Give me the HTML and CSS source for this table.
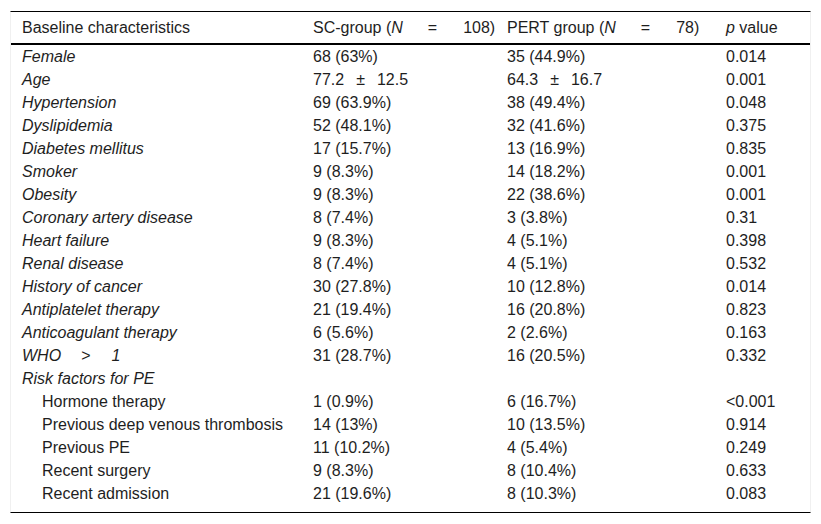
FILE: index.html
```html
<!DOCTYPE html>
<html>
<head>
<meta charset="utf-8">
<link rel="stylesheet" href="styles.css">
</head>
<body>
<div class="wrap">
<table class="tbl">
<colgroup><col class="c1"><col class="c2"><col class="c3"><col class="c4"></colgroup>
<thead>
<tr><th>Baseline characteristics</th><th>SC-group (<i>N</i><span class="eq">=</span>108)</th><th>PERT group (<i>N</i><span class="eq">=</span>78)</th><th><i>p</i> value</th></tr>
</thead>
<tbody>
<tr><td><i>Female</i></td><td>68 (63%)</td><td>35 (44.9%)</td><td>0.014</td></tr>
<tr><td><i>Age</i></td><td>77.2<span class="pm">±</span>12.5</td><td>64.3<span class="pm">±</span>16.7</td><td>0.001</td></tr>
<tr><td><i>Hypertension</i></td><td>69 (63.9%)</td><td>38 (49.4%)</td><td>0.048</td></tr>
<tr><td><i>Dyslipidemia</i></td><td>52 (48.1%)</td><td>32 (41.6%)</td><td>0.375</td></tr>
<tr><td><i>Diabetes mellitus</i></td><td>17 (15.7%)</td><td>13 (16.9%)</td><td>0.835</td></tr>
<tr><td><i>Smoker</i></td><td>9 (8.3%)</td><td>14 (18.2%)</td><td>0.001</td></tr>
<tr><td><i>Obesity</i></td><td>9 (8.3%)</td><td>22 (38.6%)</td><td>0.001</td></tr>
<tr><td><i>Coronary artery disease</i></td><td>8 (7.4%)</td><td>3 (3.8%)</td><td>0.31</td></tr>
<tr><td><i>Heart failure</i></td><td>9 (8.3%)</td><td>4 (5.1%)</td><td>0.398</td></tr>
<tr><td><i>Renal disease</i></td><td>8 (7.4%)</td><td>4 (5.1%)</td><td>0.532</td></tr>
<tr><td><i>History of cancer</i></td><td>30 (27.8%)</td><td>10 (12.8%)</td><td>0.014</td></tr>
<tr><td><i>Antiplatelet therapy</i></td><td>21 (19.4%)</td><td>16 (20.8%)</td><td>0.823</td></tr>
<tr><td><i>Anticoagulant therapy</i></td><td>6 (5.6%)</td><td>2 (2.6%)</td><td>0.163</td></tr>
<tr><td><i>WHO<span class="gt">&gt;</span>1</i></td><td>31 (28.7%)</td><td>16 (20.5%)</td><td>0.332</td></tr>
<tr><td><i>Risk factors for PE</i></td><td></td><td></td><td></td></tr>
<tr><td class="ind">Hormone therapy</td><td>1 (0.9%)</td><td>6 (16.7%)</td><td>&lt;0.001</td></tr>
<tr><td class="ind">Previous deep venous thrombosis</td><td>14 (13%)</td><td>10 (13.5%)</td><td>0.914</td></tr>
<tr><td class="ind">Previous PE</td><td>11 (10.2%)</td><td>4 (5.4%)</td><td>0.249</td></tr>
<tr><td class="ind">Recent surgery</td><td>9 (8.3%)</td><td>8 (10.4%)</td><td>0.633</td></tr>
<tr><td class="ind">Recent admission</td><td>21 (19.6%)</td><td>8 (10.3%)</td><td>0.083</td></tr>
</tbody>
</table>
</div>
</body>
</html>
```
FILE: styles.css
```css
html, body { margin: 0; padding: 0; background: #fff; }
body {
  font-family: "Liberation Sans", Arial, sans-serif;
  font-size: 16px;
  color: #1e1e1e;
}
.wrap {
  margin: 11px 10px 0 10px;
  width: 801px;
  border-left: 1px solid #f0f0f0;
  border-right: 1px solid #f0f0f0;
  border-top: 1px solid #000;
  border-bottom: 1px solid #000;
  padding-bottom: 7px;
  box-sizing: border-box;
}
.tbl {
  width: 100%;
  border-collapse: collapse;
  table-layout: fixed;
}
.c1 { width: 291px; }
.c2 { width: 194px; }
.c3 { width: 219px; }
.c4 { width: auto; }
.tbl th {
  font-weight: normal;
  text-align: left;
  height: 31px;
  padding: 0 0 0 11px;
  vertical-align: middle;
  border-bottom: 2px solid #000;
  white-space: nowrap;
}
.tbl td {
  height: 23px;
  padding: 0 0 0 11px;
  vertical-align: middle;
  white-space: nowrap;
}
.tbl td.ind { padding-left: 31px; }
.eq { padding: 0 26px 0 25px; }
.gt { padding: 0 21px 0 20px; }
.pm { padding: 0 12px; }
```
